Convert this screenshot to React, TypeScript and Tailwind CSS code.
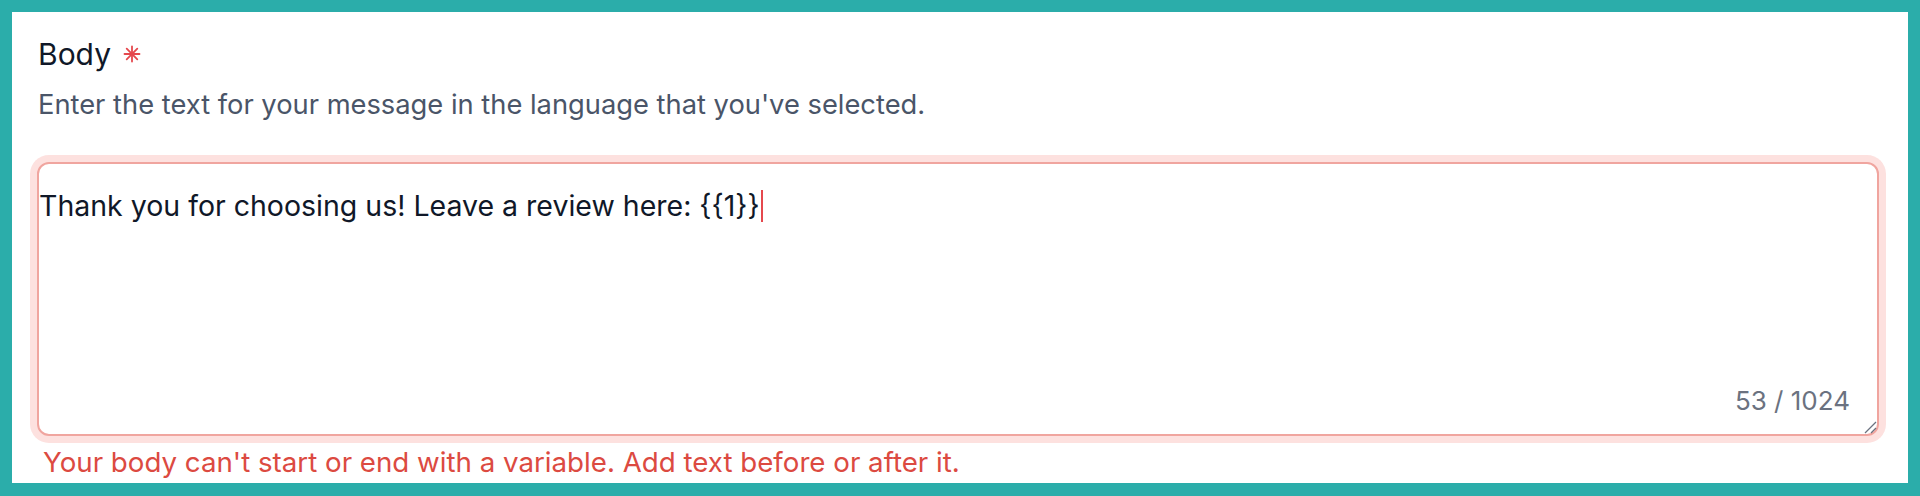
import React from 'react';

function RequiredMark() {
  return (
    <svg width="18" height="18" viewBox="0 0 18 18" aria-hidden className="shrink-0">
      <g stroke="#e5484d" strokeWidth="1.8" strokeLinecap="round">
        <line x1="9" y1="1.5" x2="9" y2="16.5" />
        <line x1="1.5" y1="9" x2="16.5" y2="9" />
        <line x1="3.7" y1="3.7" x2="14.3" y2="14.3" />
        <line x1="14.3" y1="3.7" x2="3.7" y2="14.3" />
      </g>
    </svg>
  );
}

function ResizeGrip() {
  return (
    <svg width="14" height="14" viewBox="0 0 14 14" aria-hidden className="absolute right-0 bottom-0">
      <g stroke="#6b7280" strokeWidth="1.2">
        <line x1="13" y1="2" x2="2" y2="13" />
        <line x1="13" y1="8" x2="8" y2="13" />
      </g>
    </svg>
  );
}

export default function App() {
  const body = 'Thank you for choosing us! Leave a review here: {{1}}';
  const max = 1024;

  return (
    <div
      className="h-[496px] w-full bg-[#2badaa] pt-[12px] px-[12px] pb-[13px]"
      style={{ fontFamily: 'Inter, "Noto Sans", sans-serif' }}
    >
      <div className="h-full bg-white pt-[24px] pl-[25px] pr-[29px]">
        <div className="flex items-center gap-[12px] pl-[1px]">
          <span className="text-[30px] leading-[36px] text-[#101828]">Body</span>
          <RequiredMark />
        </div>
        <p className="mt-[17px] pl-[1px] text-[27.3px] leading-[32px] text-[#4a5568]">
          Enter the text for your message in the language that you've selected.
        </p>

        <div className="relative mt-[41px] flex h-[274px] flex-col justify-between rounded-[12px] border-2 border-[#f0a59f] bg-white pt-[20px] pb-[17px] pl-0 pr-[27px] shadow-[0_0_0_7px_#fde1df]">
          <div className="text-[28.5px] leading-[36px] text-[#101828]">
            {body}
            <span className="ml-[1px] inline-block h-[32px] w-[2px] translate-y-[6px] bg-[#e5484d] align-baseline" />
          </div>
          <div className="text-right text-[26px] leading-[32px] text-[#6b7280]">
            {body.length} / {max}
          </div>
          <ResizeGrip />
        </div>

        <p className="mt-[10px] pl-[6px] text-[27.7px] leading-[32px] text-[#dc4a41]">
          Your body can't start or end with a variable. Add text before or after it.
        </p>
      </div>
    </div>
  );
}
